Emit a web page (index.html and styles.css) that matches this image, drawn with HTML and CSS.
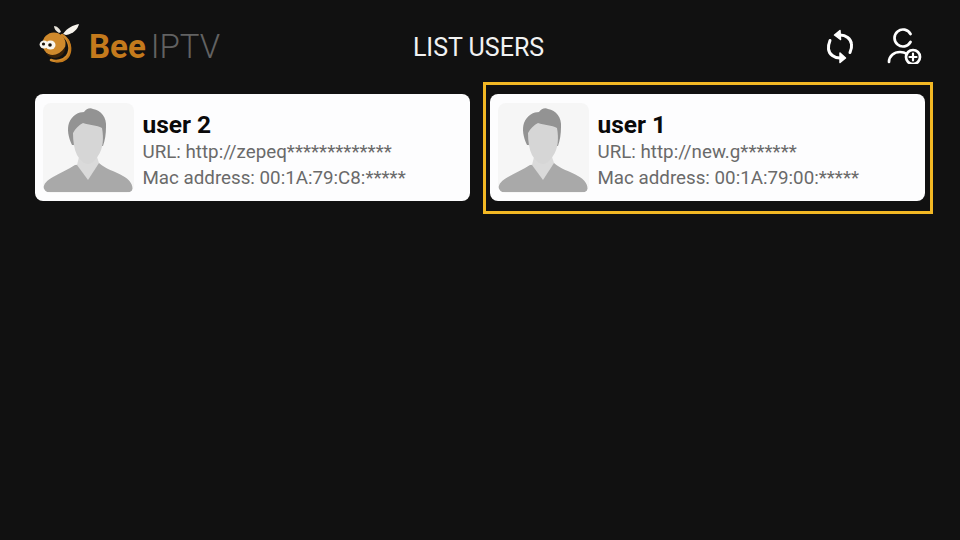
FILE: index.html
```html
<!DOCTYPE html>
<html lang="en">
<head>
  <meta charset="UTF-8">
  <meta name="viewport" content="width=device-width, initial-scale=1.0">
  <title>List Users</title>
  <link rel="stylesheet" href="styles.css">
</head>
<body>
  <header class="topbar">
    <div class="logo">
      <svg class="bee" width="50" height="50" viewBox="0 0 50 50">
        <path d="M28 14 C32 8 38 5 44 4 C43 9 38 14 31 15 Z" fill="#f6f3ec"/>
        <path d="M19 6 C22 6 25 9 26 12 L24 13 C21 11 19 9 19 6 Z" fill="#e8e4da"/>
        <path d="M27 15 C34 19 37 29 32 36 C28 41 21 42 16 40" fill="none" stroke="#d08a2c" stroke-width="2.600" stroke-linecap="round"/>
        <path d="M33 20 C37 27 36 35 31 39 C28 41.500 24 42 21 41.500" fill="none" stroke="#c47a1c" stroke-width="1.800" stroke-linecap="round"/>
        <circle cx="19" cy="24" r="11.500" fill="#d08a2c"/>
        <path d="M11 33 C17 37 25 35 30 27 C31 33 25 38.500 19 38 C16 37.500 13 36 11 33 Z" fill="#3a2208"/>
        <ellipse cx="9" cy="24.500" rx="4.400" ry="4" fill="#f8f5ee"/>
        <ellipse cx="15.500" cy="25" rx="5" ry="4.600" fill="#f8f5ee"/>
        <circle cx="8.500" cy="24" r="1.600" fill="#1a1208"/>
        <circle cx="15" cy="25" r="1.800" fill="#1a1208"/>
      </svg>
      <span class="logo-bee">Bee</span><span class="logo-iptv">IPTV</span>
    </div>
    <h1 class="title">LIST USERS</h1>
    <div class="actions">
      <svg width="30" height="36" viewBox="0 0 30 36" fill="none" stroke="#fff" stroke-width="3" stroke-linecap="round" stroke-linejoin="round">
        <path d="M14 7 C21 6.500 26 11 26.500 16 C27 19 26 22 25 24.500"/>
        <path d="M15 2.500 L9.500 7 L15.500 11.500 Z" fill="#fff" stroke-width="1.500"/>
        <path d="M16 30 C9 30.500 4 26 3.500 21 C3 18 4 15 5 12.500"/>
        <path d="M15 25 L20.500 30 L15 34.500 Z" fill="#fff" stroke-width="1.500"/>
      </svg>
      <svg width="36" height="36" viewBox="0 0 36 36" fill="none" stroke="#fff" stroke-width="2.700" stroke-linecap="round">
        <path d="M24.500 6 A8.500 8.500 0 1 0 24.500 14"/>
        <path d="M3 34 C3 28 8 24 14 24 C17 24 19.500 25 21 26"/>
        <circle cx="27" cy="29" r="7"/>
        <path d="M27 25.500 V32.500 M23.500 29 H30.500" stroke-width="2.200"/>
      </svg>
    </div>
  </header>

  <main class="user-list">
    <div class="user-item">
      <div class="user-card">
        <div class="avatar">
          <svg width="91" height="90" viewBox="0 0 91 90">
            <path d="M1 89 C-1 82 3 78 10 74 C17 70 26 66 32 62 L56 60 C62 66 72 68 80 73 C87 77 91 82 89 89 Z" fill="#a9a9a9"/>
            <path d="M34 62 L45 77 L56 60 L54 54 H36 Z" fill="#dadada"/>
            <path d="M29 42 C25 34 24 26 26 20 C29 12 36 9 41 9 C43 6 47 4 50 6 C58 7 64 15 63 24 C63 31 62 37 60 43 Z" fill="#939393"/>
            <path d="M30 30 C32 26 36 22 40 20 C46 22 54 22 59 25 C61 36 60 46 55 53 C52 58 48 61 45 61 C41 61 37 57 34 52 C31 46 30 38 30 30 Z" fill="#d6d6d6"/>
          </svg>
        </div>
        <div class="user-info">
          <div class="user-name">user 2</div>
          <div class="user-line">URL: http://zepeq*************</div>
          <div class="user-line">Mac address: 00:1A:79:C8:*****</div>
        </div>
      </div>
    </div>
    <div class="user-item selected">
      <div class="user-card">
        <div class="avatar">
          <svg width="91" height="90" viewBox="0 0 91 90">
            <path d="M1 89 C-1 82 3 78 10 74 C17 70 26 66 32 62 L56 60 C62 66 72 68 80 73 C87 77 91 82 89 89 Z" fill="#a9a9a9"/>
            <path d="M34 62 L45 77 L56 60 L54 54 H36 Z" fill="#dadada"/>
            <path d="M29 42 C25 34 24 26 26 20 C29 12 36 9 41 9 C43 6 47 4 50 6 C58 7 64 15 63 24 C63 31 62 37 60 43 Z" fill="#939393"/>
            <path d="M30 30 C32 26 36 22 40 20 C46 22 54 22 59 25 C61 36 60 46 55 53 C52 58 48 61 45 61 C41 61 37 57 34 52 C31 46 30 38 30 30 Z" fill="#d6d6d6"/>
          </svg>
        </div>
        <div class="user-info">
          <div class="user-name">user 1</div>
          <div class="user-line">URL: http://new.g*******</div>
          <div class="user-line">Mac address: 00:1A:79:00:*****</div>
        </div>
      </div>
    </div>
  </main>
</body>
</html>
```

FILE: styles.css
```css
body {
  margin: 0;
  height: 540px;
  overflow: hidden;
  background-color: #111111;
  font-family: Roboto, Arial, sans-serif;
  color: #ffffff;
}

.topbar {
  display: grid;
  grid-template-columns: 1fr auto 1fr;
  align-items: center;
  height: 82px;
  padding: 10px 38px 0 35px;
  box-sizing: border-box;
}

.logo {
  display: flex;
  align-items: center;
}

.bee {
  margin-right: 4px;
  margin-top: -2px;
}

.logo-bee {
  font-size: 33px;
  font-weight: 700;
  color: #c47a1c;
  margin-right: 5px;
}

.logo-iptv {
  font-size: 33px;
  font-weight: 300;
  color: #626262;
}

.title {
  margin: 2px 0 0;
  font-size: 25px;
  font-weight: 400;
  color: #f2f2f2;
}

.actions {
  display: flex;
  justify-content: flex-end;
  align-items: center;
  gap: 31px;
}

.user-list {
  display: grid;
  grid-template-columns: 450px 450px;
  gap: 6px;
  padding: 0 27px;
}

.user-item {
  border: 3px solid transparent;
  padding: 9px 4px 10px 5px;
}

.user-item.selected {
  border-color: #f3b824;
  padding: 9px 5px 10px 4px;
}

.user-card {
  display: flex;
  align-items: center;
  height: 107px;
  padding: 0 8px;
  box-sizing: border-box;
  background-color: #fdfdfe;
  border-radius: 8px;
}

.avatar {
  width: 91px;
  height: 90px;
  background-color: #f6f6f6;
  border-radius: 8px;
  overflow: hidden;
  flex-shrink: 0;
}

.avatar svg {
  display: block;
}

.user-info {
  margin-left: 8.5px;
  padding-top: 5px;
}

.user-name {
  font-size: 24.5px;
  font-weight: 700;
  line-height: 29px;
  color: #0a0a0a;
}

.user-line {
  font-size: 18.75px;
  line-height: 26px;
  color: #6a6a6a;
}
```
